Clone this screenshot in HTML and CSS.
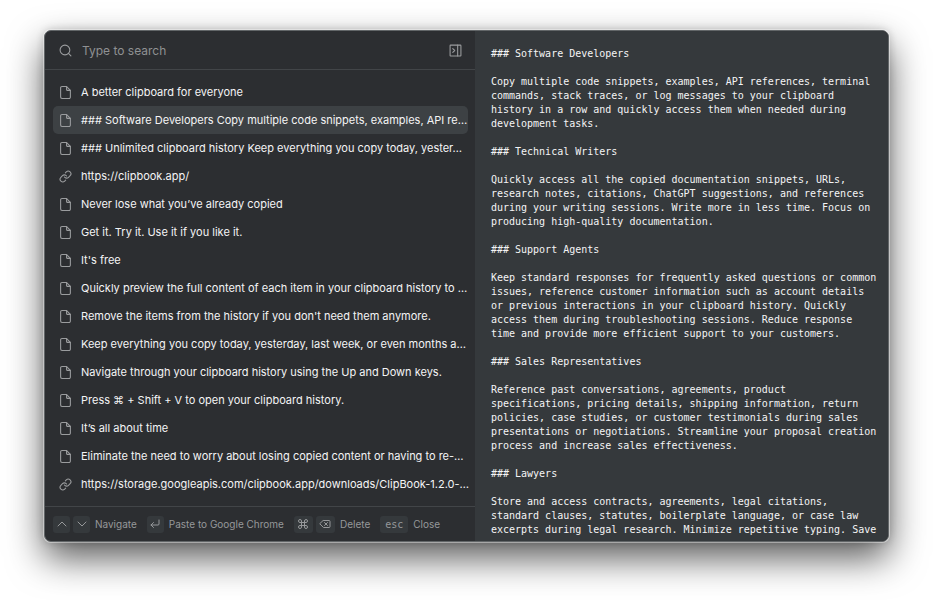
FILE: index.html
```html
<!DOCTYPE html>
<html lang="en">
<head>
<meta charset="utf-8">
<meta name="viewport" content="width=device-width, initial-scale=1">
<title>ClipBook</title>
<link rel="stylesheet" href="styles.css">
</head>
<body>
<svg class="sprite" aria-hidden="true">
  <symbol id="file" viewBox="0 0 24 24"><path d="M14 1H5.500A2.500 2.500 0 0 0 3 3.500v17A2.500 2.500 0 0 0 5.500 23h13a2.500 2.500 0 0 0 2.500-2.500V8z"/><path d="M14 1v6a1 1 0 0 0 1 1h6"/></symbol>
  <symbol id="link" viewBox="0 0 24 24"><path d="M10 13a5 5 0 0 0 7.540.540l3-3a5 5 0 0 0-7.070-7.070l-1.720 1.710"/><path d="M14 11a5 5 0 0 0-7.540-.540l-3 3a5 5 0 0 0 7.070 7.070l1.710-1.710"/></symbol>
</svg>
<main class="window">
  <section class="history">
    <header class="search">
      <label class="search-label" for="query" aria-label="Search"><svg class="icon" viewBox="0 0 24 24"><circle cx="11" cy="11" r="9"/><path d="m22 22-4.500-4.500"/></svg></label>
      <input class="search-input" id="query" type="text" placeholder="Type to search">
      <button class="toggle" type="button" aria-label="Toggle preview"><svg class="icon" viewBox="0 0 24 24"><rect x="2" y="2" width="20" height="20" rx="1"/><path d="M16 2v20M7 8.500l3.500 3.500L7 15.500"/></svg></button>
    </header>
    <ul class="list">
      <li><button class="item" type="button"><svg class="icon"><use href="#file"/></svg><span>A better clipboard for everyone</span></button></li>
      <li><button class="item selected" type="button"><svg class="icon"><use href="#file"/></svg><span>### Software Developers Copy multiple code snippets, examples, API re…</span></button></li>
      <li><button class="item" type="button"><svg class="icon"><use href="#file"/></svg><span>### Unlimited clipboard history Keep everything you copy today, yester…</span></button></li>
      <li><button class="item" type="button"><svg class="icon"><use href="#link"/></svg><span>https://clipbook.app/</span></button></li>
      <li><button class="item" type="button"><svg class="icon"><use href="#file"/></svg><span>Never lose what you’ve already copied</span></button></li>
      <li><button class="item" type="button"><svg class="icon"><use href="#file"/></svg><span>Get it. Try it. Use it if you like it.</span></button></li>
      <li><button class="item" type="button"><svg class="icon"><use href="#file"/></svg><span>It's free</span></button></li>
      <li><button class="item" type="button"><svg class="icon"><use href="#file"/></svg><span>Quickly preview the full content of each item in your clipboard history to …</span></button></li>
      <li><button class="item" type="button"><svg class="icon"><use href="#file"/></svg><span>Remove the items from the history if you don't need them anymore.</span></button></li>
      <li><button class="item" type="button"><svg class="icon"><use href="#file"/></svg><span>Keep everything you copy today, yesterday, last week, or even months a…</span></button></li>
      <li><button class="item" type="button"><svg class="icon"><use href="#file"/></svg><span>Navigate through your clipboard history using the Up and Down keys.</span></button></li>
      <li><button class="item" type="button"><svg class="icon"><use href="#file"/></svg><span>Press ⌘ + Shift + V to open your clipboard history.</span></button></li>
      <li><button class="item" type="button"><svg class="icon"><use href="#file"/></svg><span>It’s all about time</span></button></li>
      <li><button class="item" type="button"><svg class="icon"><use href="#file"/></svg><span>Eliminate the need to worry about losing copied content or having to re-…</span></button></li>
      <li><button class="item" type="button"><svg class="icon"><use href="#link"/></svg><span>https://storage.googleapis.com/clipbook.app/downloads/ClipBook-1.2.0-…</span></button></li>
    </ul>
    <footer class="shortcuts">
      <div class="shortcut">
        <kbd class="key"><svg class="key-icon" viewBox="0 0 12 12"><path d="m2 8 4-4 4 4"/></svg></kbd>
        <kbd class="key"><svg class="key-icon" viewBox="0 0 12 12"><path d="m2 4 4 4 4-4"/></svg></kbd>
        <span class="caption">Navigate</span>
      </div>
      <div class="shortcut">
        <kbd class="key"><svg class="key-icon" viewBox="0 0 12 12"><path d="M10 2v4a1 1 0 0 1-1 1H2M4.500 4.500 2 7l2.500 2.500"/></svg></kbd>
        <span class="caption">Paste to Google Chrome</span>
      </div>
      <div class="shortcut">
        <kbd class="key wide"><svg class="key-icon" viewBox="0 0 24 24"><path class="command" d="M15 6v12a3 3 0 1 0 3-3H6a3 3 0 1 0 3 3V6a3 3 0 1 0-3 3h12a3 3 0 1 0-3-3"/></svg></kbd>
        <kbd class="key wide"><svg class="key-icon" viewBox="0 0 12 12"><path d="M4.500 2.500H10a1 1 0 0 1 1 1v5a1 1 0 0 1-1 1H4.500L1 6zM5.500 4.500l3 3M8.500 4.500l-3 3"/></svg></kbd>
        <span class="caption">Delete</span>
      </div>
      <div class="shortcut">
        <kbd class="key text">esc</kbd>
        <span class="caption">Close</span>
      </div>
    </footer>
  </section>
  <section class="preview" aria-label="Preview">
<pre class="content">### Software Developers

Copy multiple code snippets, examples, API references, terminal commands, stack traces, or log messages to your clipboard history in a row and quickly access them when needed during development tasks.

### Technical Writers

Quickly access all the copied documentation snippets, URLs, research notes, citations, ChatGPT suggestions, and references during your writing sessions. Write more in less time. Focus on producing high-quality documentation.

### Support Agents

Keep standard responses for frequently asked questions or common issues, reference customer information such as account details or previous interactions in your clipboard history. Quickly access them during troubleshooting sessions. Reduce response time and provide more efficient support to your customers.

### Sales Representatives

Reference past conversations, agreements, product specifications, pricing details, shipping information, return policies, case studies, or customer testimonials during sales presentations or negotiations. Streamline your proposal creation process and increase sales effectiveness.

### Lawyers

Store and access contracts, agreements, legal citations, standard clauses, statutes, boilerplate language, or case law excerpts during legal research. Minimize repetitive typing. Save</pre>
  </section>
</main>
</body>
</html>
```
FILE: styles.css
```css
* { box-sizing: border-box; }

body {
  margin: 0;
  padding: 30px 44px 58px;
  background: #fff;
  font-family: Inter, "Liberation Sans", sans-serif;
  color: #f4f4f5;
}

button, input { font: inherit; color: inherit; background: none; border: 0; padding: 0; }

.sprite { position: absolute; width: 0; height: 0; }

svg { fill: none; stroke: currentColor; stroke-linecap: round; stroke-linejoin: round; }

.icon { display: block; flex: none; width: 13px; height: 13px; stroke-width: 2; color: #9a9c9e; }

.window {
  display: grid;
  grid-template-columns: 51fr 49fr;
  overflow: hidden;
  border: 1px solid #626668;
  border-radius: 7px;
  background: #2c2e31;
  box-shadow: 0 0 0 1px rgba(255, 255, 255, .4), 0 0 8px rgba(0, 0, 0, .2), 0 16px 36px rgba(0, 0, 0, .65);
}

.history { display: flex; flex-direction: column; min-width: 0; }

.search {
  display: flex;
  align-items: center;
  gap: 10px;
  height: 39px;
  padding: 0 13px 0 14px;
  border-bottom: 1px solid #424548;
}

.search-input { flex: 1; min-width: 0; outline: 0; font-size: 12px; line-height: 17px; }
.search-input::placeholder { color: #8f9193; opacity: 1; }

.list { flex: 1; list-style: none; margin: 0; padding: 8px 7px 8px 8px; }

.item {
  display: flex;
  align-items: center;
  gap: 9px;
  width: 100%;
  height: 28px;
  padding: 0 0 0 6px;
  border-radius: 5px;
  font-size: 11px;
  text-align: left;
}

.item span { white-space: nowrap; }
.selected { background: #3d4144; }

.shortcuts {
  display: flex;
  align-items: center;
  gap: 10px;
  height: 35px;
  padding: 0 8px;
  border-top: 1px solid #424548;
  color: #96989a;
}

.shortcut { display: flex; align-items: center; gap: 3px; }

.key {
  display: flex;
  align-items: center;
  justify-content: center;
  width: 17px;
  height: 17px;
  border-radius: 3px;
  background: #35393c;
  font: 10px "DejaVu Sans Mono", monospace;
}

.wide { width: 19px; }
.text { width: 28px; }
.key-icon { width: 12px; height: 12px; }
.command { stroke-width: 2; }
.caption { margin-left: 2px; font-size: 10px; white-space: nowrap; }

.preview { min-width: 0; padding: 16px 10px 4px 16px; background: #35393c; }

.content {
  margin: 0;
  font: 10px/14px "DejaVu Sans Mono", "Liberation Mono", monospace;
  white-space: pre-wrap;
}
```
